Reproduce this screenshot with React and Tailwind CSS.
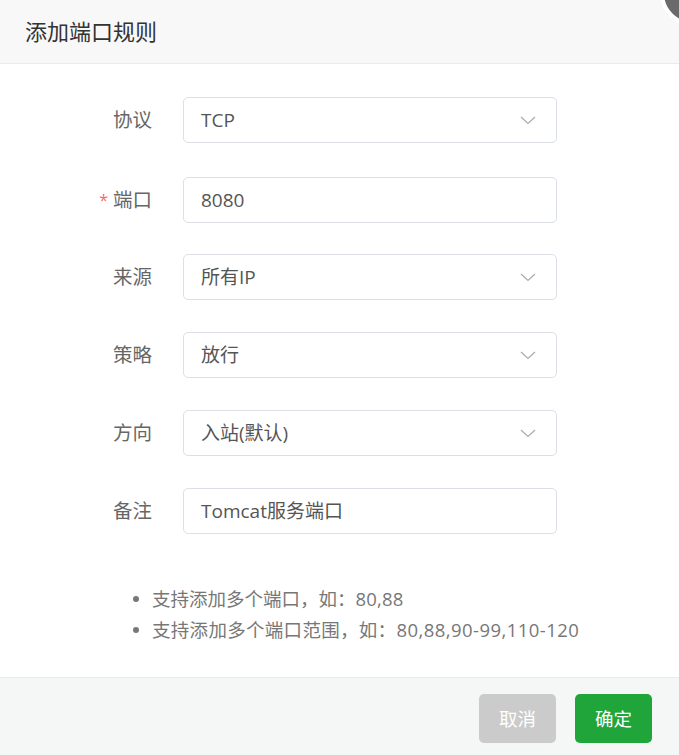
import React from 'react';

const font = { fontFamily: '"Open Sans", "Noto Sans CJK SC", sans-serif' };

const Chevron = () => (
  <svg width="16" height="9" viewBox="0 0 16 9" className="text-[#a8abb2]">
    <path d="M1 1l7 6.5L15 1" fill="none" stroke="currentColor" strokeWidth="1.2" />
  </svg>
);

const Row = ({ label, required, value, select, className }) => (
  <div className={`flex items-center ${className}`}>
    <div className="w-[152px] flex justify-end items-center text-[19.5px] text-[#666]">
      {required && <span className="text-[#f56c6c] mr-[5px] text-[16px]">*</span>}
      {label}
    </div>
    <div className="ml-[31px] w-[374px] h-[46px] border border-[#dcdfe6] rounded-[5px] bg-white flex items-center justify-between pl-[17px] pr-[20px] text-[19px] text-[#555]">
      <span>{value}</span>
      {select && <Chevron />}
    </div>
  </div>
);

export default function App() {
  return (
    <div className="relative w-[679px] h-[755px] bg-white overflow-hidden" style={font}>
      <div className="h-[64px] bg-[#f8f8f8] border-b border-[#e9ebec] flex items-center pl-[25px] text-[22px] text-[#333]">
        添加端口规则
      </div>
      <div className="absolute top-[-40px] left-[660px] w-[66px] h-[66px] rounded-full bg-[#6a6a6a] border-[4px] border-white" />

      <div className="pt-[33px]">
        <Row label="协议" value="TCP" select className="mb-[34px]" />
        <Row label="端口" required value="8080" className="mb-[31px]" />
        <Row label="来源" value="所有IP" select className="mb-[32px]" />
        <Row label="策略" value="放行" select className="mb-[32px]" />
        <Row label="方向" value="入站(默认)" select className="mb-[32px]" />
        <Row label="备注" value="Tomcat服务端口" />
      </div>

      <ul className="mt-[49px] pl-[152px] text-[18.5px] text-[#777] leading-[31px]">
        <li className="relative">
          <span className="absolute left-[-19px] top-[13px] w-[6px] h-[6px] rounded-full bg-[#777]" />
          支持添加多个端口，如：<span className="tracking-[0.2px]">80,88</span>
        </li>
        <li className="relative">
          <span className="absolute left-[-19px] top-[13px] w-[6px] h-[6px] rounded-full bg-[#777]" />
          <span className="tracking-[0.3px]">支持添加多个端口范围，如：</span>
          <span className="tracking-[0.45px]">80,88,90-99,110-120</span>
        </li>
      </ul>

      <div className="absolute left-0 right-0 bottom-0 h-[78px] bg-[#f5f6f6] border-t border-[#e9ebec] flex items-start justify-end gap-[19px] pt-[16px] pr-[27px]">
        <button className="w-[77px] h-[49px] rounded-[5px] bg-[#cbcbcb] text-white text-[18.5px]">取消</button>
        <button className="w-[77px] h-[49px] rounded-[5px] bg-[#20a53a] text-white text-[18.5px]">确定</button>
      </div>
    </div>
  );
}
